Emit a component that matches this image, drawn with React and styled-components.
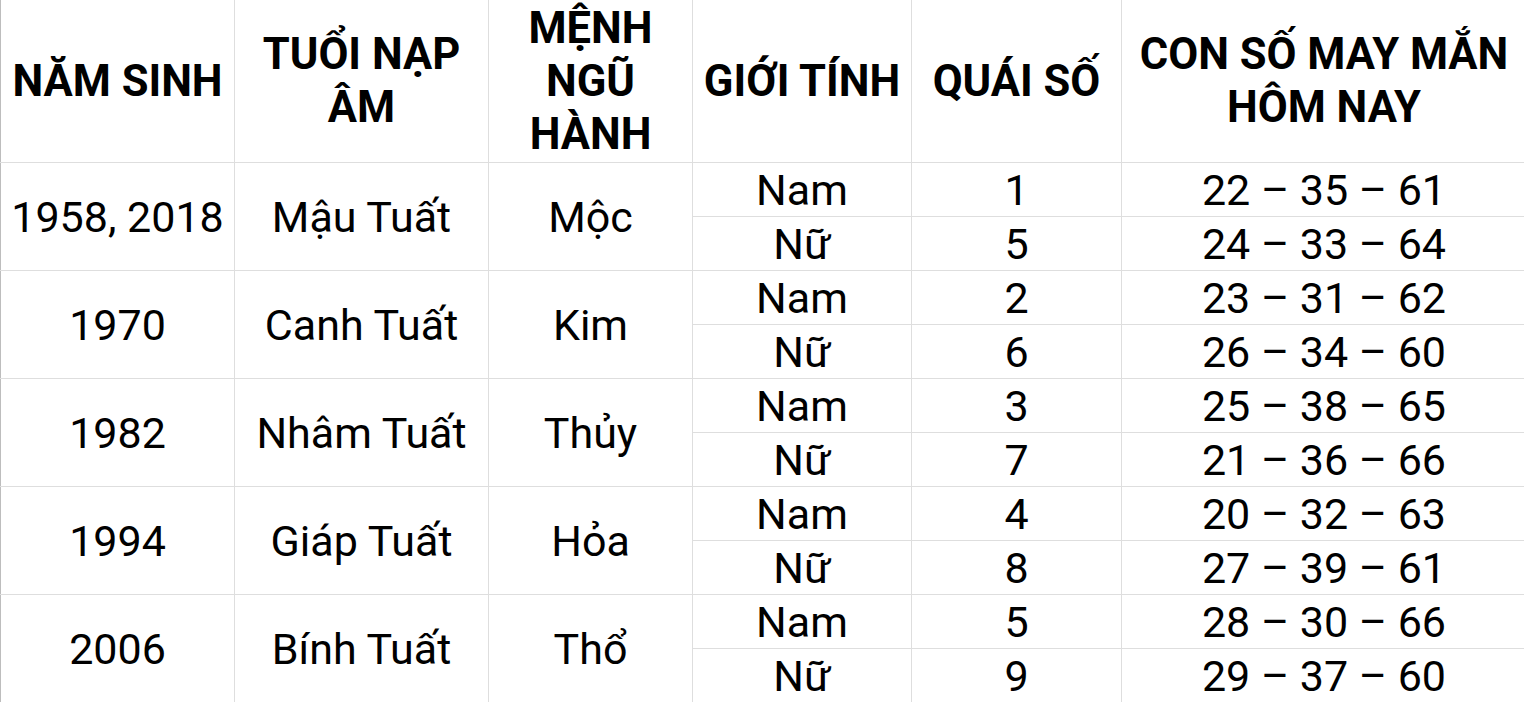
import styled, { createGlobalStyle } from 'styled-components';

const GlobalStyle = createGlobalStyle`
	html, body {
		margin: 0;
		padding: 0;
		background: #fff;
		overflow: hidden;
	}
	body {
		font-family: Roboto, 'Noto Sans', sans-serif;
		color: #000;
	}
`;

const rows = [
	{ year: '1958, 2018', tuoi: 'Mậu Tuất', menh: 'Mộc', nam: ['1', '22 – 35 – 61'], nu: ['5', '24 – 33 – 64'] },
	{ year: '1970', tuoi: 'Canh Tuất', menh: 'Kim', nam: ['2', '23 – 31 – 62'], nu: ['6', '26 – 34 – 60'] },
	{ year: '1982', tuoi: 'Nhâm Tuất', menh: 'Thủy', nam: ['3', '25 – 38 – 65'], nu: ['7', '21 – 36 – 66'] },
	{ year: '1994', tuoi: 'Giáp Tuất', menh: 'Hỏa', nam: ['4', '20 – 32 – 63'], nu: ['8', '27 – 39 – 61'] },
	{ year: '2006', tuoi: 'Bính Tuất', menh: 'Thổ', nam: ['5', '28 – 30 – 66'], nu: ['9', '29 – 37 – 60'] },
];

const widths = [234, 254, 204, 219, 210, 405];

function App() {
	return (
		<>
			<GlobalStyle />
			<Table>
				<colgroup>
					{widths.map((w, i) => (
						<col key={i} style={{ width: w }} />
					))}
				</colgroup>
				<thead>
					<tr>
						<Head>NĂM SINH</Head>
						<Head>TUỔI NẠP<br />ÂM</Head>
						<Head>MỆNH<br />NGŨ<br />HÀNH</Head>
						<Head>GIỚI TÍNH</Head>
						<Head>QUÁI SỐ</Head>
						<Head>CON SỐ MAY MẮN<br />HÔM NAY</Head>
					</tr>
				</thead>
				<tbody>
					{rows.map((r) => (
						<>
							<tr key={r.year + 'a'}>
								<Cell rowSpan={2}>{r.year}</Cell>
								<Cell rowSpan={2}>{r.tuoi}</Cell>
								<Cell rowSpan={2}>{r.menh}</Cell>
								<Cell>Nam</Cell>
								<Cell>{r.nam[0]}</Cell>
								<Cell>{r.nam[1]}</Cell>
							</tr>
							<tr key={r.year + 'b'}>
								<Cell>Nữ</Cell>
								<Cell>{r.nu[0]}</Cell>
								<Cell>{r.nu[1]}</Cell>
							</tr>
						</>
					))}
				</tbody>
			</Table>
		</>
	);
}

export default App;

const Table = styled.table`
	width: 1526px;
	table-layout: fixed;
	border-collapse: collapse;
	border-left: 1px solid #bdbdbd;

	tr > * {
		border: 1px solid #dedede;
		text-align: center;
		vertical-align: middle;
		padding: 0;
	}
	thead tr > * {
		border-top: none;
	}
	tr > *:first-child {
		border-left: 1px solid #bdbdbd;
	}
`;

const Head = styled.th`
	height: 162px;
	font-size: 43.5px;
	font-weight: 700;
	line-height: 53px;
	white-space: nowrap;
`;

const Cell = styled.td`
	height: 51px;
	font-size: 43px;
	font-weight: 400;
	line-height: 51px;
	white-space: nowrap;
	padding-top: 2px !important;
`;
